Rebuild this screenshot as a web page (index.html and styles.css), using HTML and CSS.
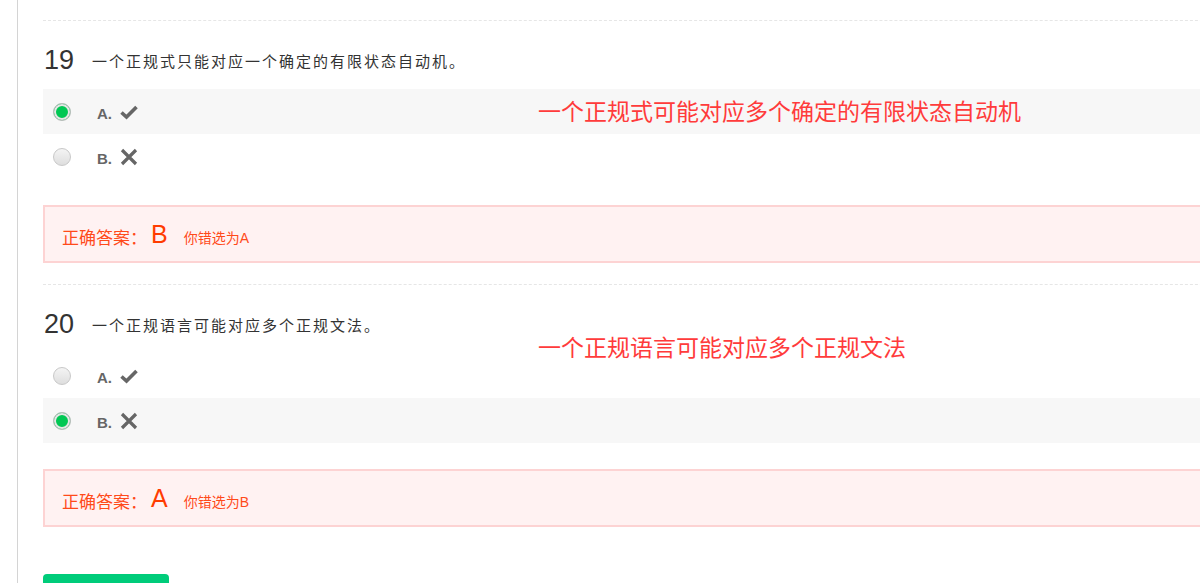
FILE: index.html
```html
<!DOCTYPE html>
<html lang="zh-CN">
<head>
<meta charset="utf-8">
<title>作业</title>
<link rel="stylesheet" href="styles.css">
</head>
<body>
<div class="page">
  <div class="main">
    <div class="top-gap"></div>

    <div class="question">
      <div class="q-title"><span class="q-num">19</span><span class="q-text">一个正规式只能对应一个确定的有限状态自动机。</span></div>
      <ul class="options">
        <li class="option selected">
          <span class="radio checked"></span>
          <span class="opt-label">A.</span>
          <svg class="icon" width="18" height="16" viewBox="0 0 18 16"><polyline points="1.5,8.5 6.5,13 16.5,3" fill="none" stroke="#666" stroke-width="3.6" stroke-linecap="butt" stroke-linejoin="miter"/></svg>
        </li>
        <li class="option">
          <span class="radio"></span>
          <span class="opt-label">B.</span>
          <svg class="icon" width="18" height="18" viewBox="0 0 18 18"><path d="M2 2 L16 16 M16 2 L2 16" fill="none" stroke="#666" stroke-width="3.2"/></svg>
        </li>
      </ul>
      <div class="answer">
        <span class="ans-label">正确答案：</span><span class="ans-key">B</span><span class="ans-wrong">你错选为A</span>
      </div>
    </div>

    <div class="question">
      <div class="q-title"><span class="q-num">20</span><span class="q-text">一个正规语言可能对应多个正规文法。</span></div>
      <ul class="options">
        <li class="option">
          <span class="radio"></span>
          <span class="opt-label">A.</span>
          <svg class="icon" width="18" height="16" viewBox="0 0 18 16"><polyline points="1.5,8.5 6.5,13 16.5,3" fill="none" stroke="#666" stroke-width="3.6" stroke-linecap="butt" stroke-linejoin="miter"/></svg>
        </li>
        <li class="option selected">
          <span class="radio checked"></span>
          <span class="opt-label">B.</span>
          <svg class="icon" width="18" height="18" viewBox="0 0 18 18"><path d="M2 2 L16 16 M16 2 L2 16" fill="none" stroke="#666" stroke-width="3.2"/></svg>
        </li>
      </ul>
      <div class="answer">
        <span class="ans-label">正确答案：</span><span class="ans-key">A</span><span class="ans-wrong">你错选为B</span>
      </div>
    </div>

    <div class="actions"><button class="btn-submit" aria-label="返回"></button></div>
  </div>

  <div class="note note-1">一个正规式可能对应多个确定的有限状态自动机</div>
  <div class="note note-2">一个正规语言可能对应多个正规文法</div>
</div>
</body>
</html>
```

FILE: styles.css
```css
html, body {
  margin: 0;
  padding: 0;
  height: 100%;
  overflow: hidden;
  background: #fff;
}

body {
  font-family: "Liberation Sans", "Noto Sans CJK SC", sans-serif;
  color: #333;
}

.page {
  position: relative;
  width: 1200px;
  height: 583px;
  overflow: hidden;
}

.main {
  margin-left: 17px;
  border-left: 1px solid #d4d4d4;
  padding-left: 25px;
  width: 1200px;
  min-height: 583px;
}

.top-gap {
  height: 20px;
}

.question {
  border-top: 1px dashed #e6e6e6;
  padding-top: 24px;
}

.q-title {
  display: flex;
  align-items: center;
  height: 30px;
  margin-bottom: 14px;
}

.q-num {
  font-size: 27px;
  color: #333;
  width: 48px;
  padding-left: 1px;
  line-height: 30px;
}

.q-text {
  font-size: 15px;
  letter-spacing: 2px;
  color: #333;
}

.options {
  list-style: none;
  margin: 0;
  padding: 0;
}

.option {
  display: flex;
  align-items: center;
  height: 45px;
  padding-left: 10px;
}

.option.selected {
  background: #f7f7f7;
}

.radio {
  width: 16px;
  height: 16px;
  border-radius: 50%;
  border: 1px solid #c8c8c8;
  background: linear-gradient(#f4f4f4, #dedede);
  box-sizing: content-box;
  margin-right: 26px;
  flex: none;
}

.radio.checked {
  background: #00c853;
  border: 1px solid #bdbdbd;
  box-shadow: inset 0 0 0 2px #e6e6e6;
}

.opt-label {
  font-size: 15px;
  font-weight: bold;
  color: #666;
  margin-right: 8px;
  position: relative;
  top: 2px;
}

.icon {
  display: block;
}

.answer {
  margin-top: 26px;
  margin-bottom: 21px;
  height: 54px;
  border: 2px solid #fdd3d3;
  background: #fff2f2;
  display: flex;
  align-items: center;
  padding-left: 17px;
  color: #ff4a1a;
}

.ans-label {
  font-size: 17px;
  position: relative;
  top: 2px;
}

.ans-key {
  font-size: 25px;
  margin-left: 4px;
  margin-right: 16px;
  color: #ff3c00;
}

.ans-wrong {
  font-size: 14px;
  position: relative;
  top: 3px;
}

.actions {
  padding-top: 26px;
}

.btn-submit {
  display: block;
  width: 126px;
  height: 40px;
  border: none;
  border-radius: 4px;
  background: #00cc7a;
  font-family: inherit;
}

.note {
  position: absolute;
  left: 538px;
  font-size: 23px;
  line-height: 30px;
  color: #ff3b3b;
  font-family: "Noto Sans CJK SC", sans-serif;
}

.note-1 {
  top: 95px;
}

.note-2 {
  top: 331px;
}
```
